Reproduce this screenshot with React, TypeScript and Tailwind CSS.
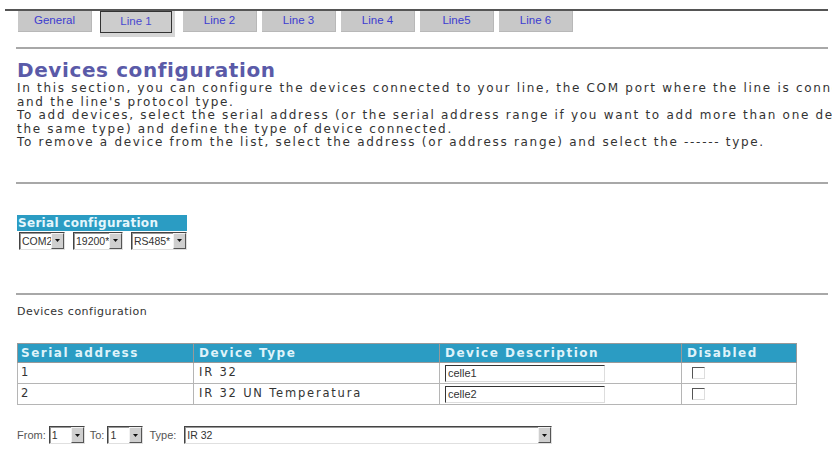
import React from 'react';

const tabs = ['General', 'Line 1', 'Line 2', 'Line 3', 'Line 4', 'Line5', 'Line 6'];
const activeTab = 'Line 1';

const devices = [
  { addr: '1', type: 'IR 32', desc: 'celle1' },
  { addr: '2', type: 'IR 32 UN Temperatura', desc: 'celle2' },
];

// old-style windows combo box
function Combo({ value, w }: { value: string; w: string }) {
  return (
    <div
      className={`${w} h-[18px] flex bg-white border border-t-[#444] border-l-[#444] border-b-[#e0e0e0] border-r-[#e0e0e0] shadow-[inset_1px_1px_0_#999]`}
    >
      <span className="flex-1 pl-[2px] text-[10.5px] leading-[16px] text-[#333] font-['Liberation_Sans',Arial,sans-serif] overflow-hidden">
        {value}
      </span>
      <span className="w-[13px] h-full bg-[#cfcfcf] border border-t-[#f2f2f2] border-l-[#f2f2f2] border-b-[#555] border-r-[#555] flex items-center justify-center">
        <svg width="5" height="3" viewBox="0 0 5 3">
          <path d="M0 0h5L2.5 3z" fill="#111" />
        </svg>
      </span>
    </div>
  );
}

export default function App() {
  return (
    <div className="w-[832px] h-[476px] overflow-hidden bg-white text-[#333] font-['DejaVu_Sans',Verdana,sans-serif]">
      {/* tab strip */}
      <div className="pt-[9px]">
        <div className="ml-[5px] mr-[4px] border-t-2 border-[#555] pl-[13px] flex gap-[5px] items-start">
          {tabs.map((t) =>
            t === activeTab ? (
              <div
                key={t}
                className="mx-[3px] w-[75px] h-[26px] bg-[#d6d6d6] pb-[4px] pr-[3px]"
              >
                <div className="h-full border border-[#333] bg-[#cdcdcd] flex items-center justify-center text-[11.5px] text-[#4a4ad0] font-['Liberation_Sans',Arial,sans-serif]">
                  {t}
                </div>
              </div>
            ) : (
              <div
                key={t}
                className="w-[74px] h-[21px] bg-[#c8c8c8] border-r border-b border-[#b8b8b8] flex items-center justify-center text-[11.5px] text-[#3c3cd0] font-['Liberation_Sans',Arial,sans-serif]"
              >
                {t}
              </div>
            )
          )}
        </div>
        <div className="ml-[16px] mr-[4px] mt-[10px] h-[2px] bg-[#a8a8a8]" />
      </div>

      <div className="pl-[17px] whitespace-nowrap">
        <h1 className="mt-[10px] text-[20px] leading-[22px] font-bold text-[#5a5aa8] tracking-[0.6px]">
          Devices configuration
        </h1>
        <div className="text-[12px] leading-[13.5px] tracking-[1.7px] mt-[1px]">
          <p>
            In this section, you can configure the devices connected to your line, the COM port
            where the line is connected
          </p>
          <p>and the line's protocol type.</p>
          <p>
            To add devices, select the serial address (or the serial address range if you want to
            add more than one device of
          </p>
          <p>the same type) and define the type of device connected.</p>
          <p>
            To remove a device from the list, select the address (or address range) and select the
            ------ type.
          </p>
        </div>
      </div>

      <div className="ml-[16px] mr-[4px] mt-[32px] h-[2px] bg-[#a8a8a8]" />

      {/* serial port settings */}
      <div className="ml-[17px] mt-[31px] w-[170px]">
        <div className="h-[16px] bg-[#2b9cc3] text-[12px] leading-[16px] pl-[1px] font-bold text-[#e4f6fc] tracking-[0.3px]">
          Serial configuration
        </div>
        <div className="flex gap-[8px] pl-[2px] pt-[1px]">
          <Combo value="COM2" w="w-[46px]" />
          <Combo value="19200*" w="w-[50px]" />
          <Combo value="RS485*" w="w-[62px]" />
        </div>
      </div>

      <div className="ml-[16px] mr-[4px] mt-[43px] h-[2px] bg-[#a8a8a8]" />

      <p className="ml-[17px] mt-[9px] text-[11px] tracking-[0.5px]">Devices configuration</p>

      <table className="ml-[17px] mt-[23px] w-[780px] border-collapse text-[11.5px] tracking-[1.8px]">
        <thead>
          <tr className="bg-[#2b9cc3] text-[#dff3fa] text-[12px] tracking-[1.5px]">
            <th className="w-[176px] h-[18px] text-left pl-[3px] font-bold border border-[#999]">
              Serial address
            </th>
            <th className="w-[246px] text-left pl-[5px] font-bold border border-[#999]">
              Device Type
            </th>
            <th className="w-[242px] text-left pl-[5px] font-bold border border-[#999]">
              Device Description
            </th>
            <th className="text-left pl-[5px] font-bold border border-[#999]">Disabled</th>
          </tr>
        </thead>
        <tbody>
          {devices.map((d) => (
            <tr key={d.addr} className="h-[21px]">
              <td className="pl-[3px] border border-[#b5b5b5]">{d.addr}</td>
              <td className="pl-[5px] border border-[#b5b5b5]">{d.type}</td>
              <td className="pl-[5px] border border-[#b5b5b5]">
                <div className="w-[160px] h-[17px] bg-white border border-t-[#333] border-l-[#333] border-b-[#ddd] border-r-[#ddd] pl-[2px] text-[11px] leading-[15px] tracking-normal font-['Liberation_Sans',Arial,sans-serif]">
                  {d.desc}
                </div>
              </td>
              <td className="pl-[10px] border border-[#b5b5b5]">
                <div className="w-[13px] h-[12px] bg-white border border-t-[#555] border-l-[#555] border-b-[#ddd] border-r-[#ddd]" />
              </td>
            </tr>
          ))}
        </tbody>
      </table>

      {/* range picker */}
      <div className="ml-[17px] mt-[21px] flex items-center text-[11px] text-[#555] font-['Liberation_Sans',Arial,sans-serif]">
        <span className="mr-[3px]">From:</span>
        <Combo value="1" w="w-[36px]" />
        <span className="ml-[5px] mr-[3px]">To:</span>
        <Combo value="1" w="w-[36px]" />
        <span className="ml-[6px] mr-[8px]">Type:</span>
        <Combo value="IR 32" w="w-[368px]" />
      </div>
    </div>
  );
}
